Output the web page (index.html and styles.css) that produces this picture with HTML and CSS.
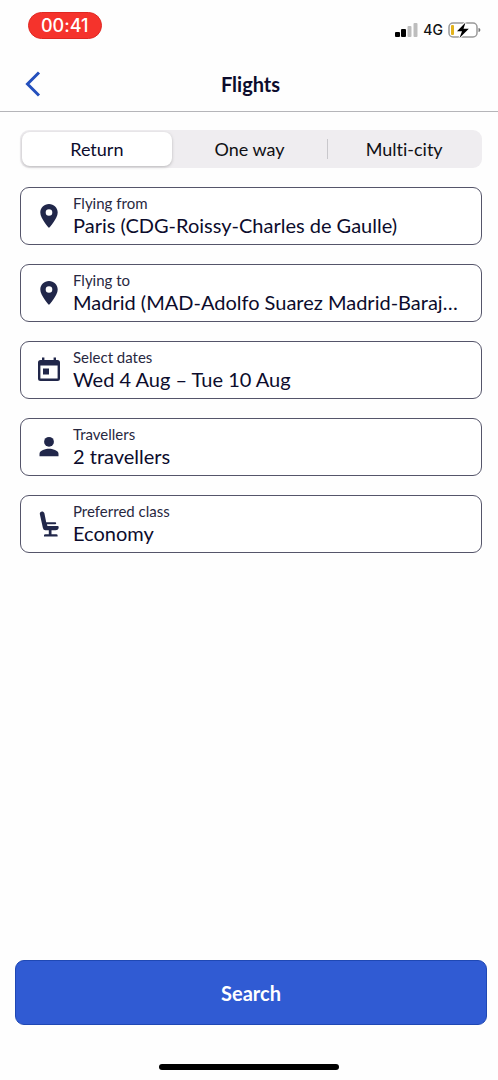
FILE: index.html
```html
<!DOCTYPE html>
<html lang="en">
<head>
<meta charset="utf-8">
<meta name="viewport" content="width=device-width, initial-scale=1">
<title>Flights</title>
<link rel="stylesheet" href="styles.css">
</head>
<body>
<div class="screen">
  <div class="status">
    <span class="clock">00:41</span>
    <div class="signals">
      <svg class="bars" width="23" height="15" viewBox="0 0 23 15" aria-hidden="true">
        <rect x="0" y="9" width="5" height="5" rx="1"/>
        <rect x="6" y="6" width="5" height="8" rx="1"/>
        <rect class="dim" x="12.500" y="3" width="4" height="11" rx="1"/>
        <rect class="dim" x="18.500" y="0" width="4" height="14" rx="1"/>
      </svg>
      <span class="network">4G</span>
      <svg class="battery" width="33" height="18" viewBox="0 0 33 18" aria-hidden="true">
        <rect class="case" x="1" y="2" width="28" height="14" rx="4"/>
        <rect class="charge" x="3" y="4" width="3" height="10" rx="1"/>
        <path class="cap" d="M30.500 7v4c1.500-.4 1.800-1.100 1.800-2s-.3-1.600-1.800-2z"/>
        <path class="bolt" d="M17.500 1.500 9 10.200h5l-2.500 6.800L20.800 7.800h-5.300z"/>
      </svg>
    </div>
  </div>
  <header class="header">
    <button class="back" type="button" aria-label="Back">
      <svg width="16" height="26" viewBox="0 0 16 26" aria-hidden="true"><path d="M14 1.500 2.500 13 14 24.500"/></svg>
    </button>
    <h1 class="title">Flights</h1>
  </header>
  <form class="form">
    <div class="segments" role="radiogroup" aria-label="Trip type">
      <label class="segment"><input type="radio" name="trip" checked><span>Return</span></label>
      <label class="segment"><input type="radio" name="trip"><span>One way</span></label>
      <label class="segment divided"><input type="radio" name="trip"><span>Multi-city</span></label>
    </div>
    <button class="field" type="button">
      <svg class="icon" viewBox="0 0 28 28" aria-hidden="true"><path fill-rule="evenodd" d="M14 2C9.100 2 5.300 5.700 5.300 10.500 5.300 16.500 14 26 14 26s8.700-9.500 8.700-15.500C22.700 5.700 18.900 2 14 2zm0 5.200a3.300 3.300 0 1 1 0 6.600 3.300 3.300 0 0 1 0-6.600z"/></svg>
      <span class="texts"><span class="label">Flying from</span><span class="value">Paris (CDG-Roissy-Charles de Gaulle)</span></span>
    </button>
    <button class="field" type="button">
      <svg class="icon" viewBox="0 0 28 28" aria-hidden="true"><path fill-rule="evenodd" d="M14 2C9.100 2 5.300 5.700 5.300 10.500 5.300 16.500 14 26 14 26s8.700-9.500 8.700-15.500C22.700 5.700 18.900 2 14 2zm0 5.200a3.300 3.300 0 1 1 0 6.600 3.300 3.300 0 0 1 0-6.600z"/></svg>
      <span class="texts"><span class="label">Flying to</span><span class="value">Madrid (MAD-Adolfo Suarez Madrid-Baraj…</span></span>
    </button>
    <button class="field" type="button">
      <svg class="icon" viewBox="0 0 28 28" aria-hidden="true"><path fill-rule="evenodd" d="M7 1.500h2.400V4h9.200V1.500H21V4h1.500A2.500 2.500 0 0 1 25 6.500v16a2.500 2.500 0 0 1-2.500 2.500h-17A2.500 2.500 0 0 1 3 22.500v-16A2.500 2.500 0 0 1 5.500 4H7zM5.400 9.500v13.100h17.200V9.500zM8 12.500h6v6H8z"/></svg>
      <span class="texts"><span class="label">Select dates</span><span class="value">Wed 4 Aug – Tue 10 Aug</span></span>
    </button>
    <button class="field" type="button">
      <svg class="icon" viewBox="0 0 28 28" aria-hidden="true"><circle cx="14" cy="8.800" r="4.900"/><path d="M4.500 23.200v-2.400c0-3.300 6.200-5 9.500-5s9.500 1.700 9.500 5v2.400z"/></svg>
      <span class="texts"><span class="label">Travellers</span><span class="value">2 travellers</span></span>
    </button>
    <button class="field" type="button">
      <svg class="icon" viewBox="0 0 28 28" aria-hidden="true"><path d="M4.800 4C4.500.9 8.600.6 9.400 3.200L11.200 12.200h9q1 0 1 1t-1 1H12l.4 1.800h10.300q1 0 1 1.200 0 3-3.300 3h-3.900v4h4.700q1.400 0 1.400 1v1.400H9v-1.400q0-1 1.400-1h3.400v-4h-3.500q-1.900 0-2.400-2.200z"/></svg>
      <span class="texts"><span class="label">Preferred class</span><span class="value">Economy</span></span>
    </button>
    <button class="search" type="submit">Search</button>
  </form>
  <div class="home"></div>
</div>
</body>
</html>
```
FILE: styles.css
```css
* { box-sizing: border-box; }
body {
  margin: 0;
  background: #fefefe;
  color: #0c0c2c;
  font-family: Lato, "Liberation Sans", sans-serif;
  font-variant-ligatures: none;
}
button { font: inherit; color: inherit; cursor: pointer; }
.screen {
  display: flex;
  flex-direction: column;
  min-height: 100vh;
}
.status {
  display: flex;
  align-items: flex-start;
  justify-content: space-between;
  height: 57px;
  padding: 12px 17px 0 28px;
  font-family: Inter, "Liberation Sans", sans-serif;
}
.clock {
  padding: 0 12px;
  border: 1px solid #e02722;
  border-radius: 14px;
  background: #f5332c;
  color: #fff;
  font-size: 18px;
  font-weight: 500;
  line-height: 25px;
}
.signals {
  display: flex;
  align-items: center;
  gap: 5px;
  padding-top: 9px;
  color: #111;
}
.network { font-size: 14px; font-weight: 500; line-height: 18px; }
.bars { fill: #000; }
.bars .dim { fill: #bdbdbd; }
.case { fill: #fff; stroke: #999; stroke-width: 1.500; }
.charge { fill: #e2b21c; }
.cap { fill: #777; }
.bolt { fill: #000; stroke: #fff; stroke-width: 2; paint-order: stroke; }
.header {
  display: grid;
  grid-template-columns: 52px 1fr 49px;
  align-items: center;
  height: 55px;
  border-bottom: 1px solid #b5b5b9;
}
.back {
  display: flex;
  justify-content: flex-end;
  padding: 0 11px 0 0;
  border: 0;
  background: none;
}
.back path { fill: none; stroke: #2450bd; stroke-width: 3; }
.title {
  margin: 0;
  font-size: 20px;
  font-weight: 700;
  line-height: 24px;
  text-align: center;
}
.form {
  flex: 1;
  display: flex;
  flex-direction: column;
  gap: 19px;
  padding: 18px 16px 0 20px;
}
.segments {
  display: grid;
  grid-template-columns: 100fr 104fr 102fr;
  height: 38px;
  padding: 2px;
  border-radius: 9px;
  background: #efedf0;
}
.segment {
  position: relative;
  display: flex;
  font-size: 18px;
  color: #101014;
  cursor: pointer;
}
.segment input { position: absolute; opacity: 0; }
.segment span {
  flex: 1;
  display: flex;
  align-items: center;
  justify-content: center;
  border-radius: 8px;
}
.segment input:checked + span {
  background: #fff;
  color: #0c0c2c;
  box-shadow: 0 1px 3px #8888;
}
.divided::before {
  content: "";
  width: 1px;
  margin: 7px 0;
  background: #c9c8cc;
}
.field {
  display: flex;
  align-items: center;
  gap: 10px;
  height: 58px;
  padding: 0 19px 0 14px;
  border: 1px solid #55556a;
  border-radius: 9px;
  background: #fff;
  text-align: left;
}
.icon { flex: none; width: 28px; height: 28px; fill: #21274a; }
.texts { flex: 1; display: flex; flex-direction: column; min-width: 0; padding-bottom: 2px; }
.label { font-size: 15px; line-height: 20px; color: #28283f; }
.value {
  overflow: hidden;
  font-size: 20px;
  line-height: 24px;
  text-overflow: ellipsis;
  white-space: nowrap;
}
.search {
  height: 65px;
  margin: auto -5px 0;
  border: 1px solid #1f48b4;
  border-radius: 9px;
  background: #305bd3;
  color: #fff;
  font-size: 20px;
  font-weight: 700;
}
.home {
  width: 36%;
  height: 6px;
  margin: 39px auto 10px;
  border-radius: 3px;
  background: #000;
}
```
